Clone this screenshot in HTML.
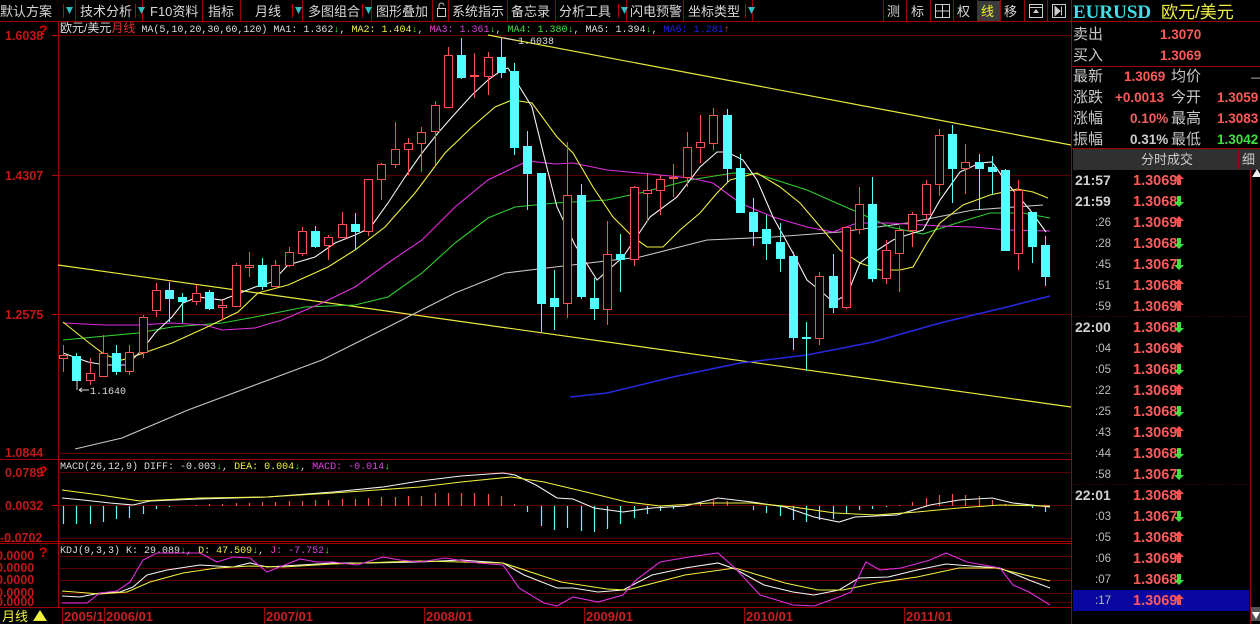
<!DOCTYPE html>
<html><head><meta charset="utf-8"><style>
html,body{margin:0;padding:0;background:#000;width:1260px;height:624px;overflow:hidden}
svg{display:block}
text{font-family:"Liberation Sans","WenQuanYi Zen Hei",sans-serif}
.tb{fill:#d8d8d8;font-size:13px;font-family:"WenQuanYi Zen Hei","Noto Sans CJK SC",sans-serif}
.m{font-family:"Liberation Mono","WenQuanYi Zen Hei",monospace;font-size:10px}
.ax{fill:#c01818;font-size:12.5px;font-weight:bold;font-family:"Liberation Sans",sans-serif}
.lab{fill:#c8c8c8;font-size:15px;font-family:"WenQuanYi Zen Hei","Noto Sans CJK SC",sans-serif}
.v{fill:#ff5a5a;font-size:13.5px;font-weight:bold;font-family:"Liberation Sans",sans-serif}
.t{fill:#d0d0d0;font-size:14px;font-weight:bold;font-family:"Liberation Sans",sans-serif}
.ts{fill:#bbb;font-size:11.5px;font-family:"Liberation Sans",sans-serif}
.dt{fill:#c82020;font-size:13px;font-weight:bold;font-family:"Liberation Sans",sans-serif}
</style></head><body>
<svg width="1260" height="624" viewBox="0 0 1260 624" xmlns="http://www.w3.org/2000/svg">
<rect width="1260" height="624" fill="#000"/>
<g stroke="#a00000" stroke-width="1">
<line x1="0" y1="21.5" x2="1260" y2="21.5"/>
<line x1="75.5" y1="0" x2="75.5" y2="21"/><line x1="142.5" y1="0" x2="142.5" y2="21"/><line x1="202.5" y1="0" x2="202.5" y2="21"/><line x1="240.5" y1="0" x2="240.5" y2="21"/><line x1="302.5" y1="0" x2="302.5" y2="21"/><line x1="371.5" y1="0" x2="371.5" y2="21"/><line x1="432.5" y1="0" x2="432.5" y2="21"/><line x1="448.5" y1="0" x2="448.5" y2="21"/><line x1="507.5" y1="0" x2="507.5" y2="21"/><line x1="555.5" y1="0" x2="555.5" y2="21"/><line x1="626.5" y1="0" x2="626.5" y2="21"/><line x1="683.5" y1="0" x2="683.5" y2="21"/><line x1="752.5" y1="0" x2="752.5" y2="21"/>
<line x1="883.5" y1="0" x2="883.5" y2="21"/><line x1="906.5" y1="0" x2="906.5" y2="21"/><line x1="930.5" y1="0" x2="930.5" y2="21"/><line x1="953.5" y1="0" x2="953.5" y2="21"/><line x1="977.5" y1="0" x2="977.5" y2="21"/><line x1="1000.5" y1="0" x2="1000.5" y2="21"/><line x1="1024.5" y1="0" x2="1024.5" y2="21"/><line x1="1047.5" y1="0" x2="1047.5" y2="21"/><line x1="1071.5" y1="0" x2="1071.5" y2="624"/>
</g>
<g stroke="#c00000"><line x1="63.5" y1="4" x2="63.5" y2="18"/><line x1="135.5" y1="4" x2="135.5" y2="18"/><line x1="292.5" y1="4" x2="292.5" y2="18"/><line x1="362.5" y1="4" x2="362.5" y2="18"/><line x1="618.5" y1="4" x2="618.5" y2="18"/><line x1="745.5" y1="4" x2="745.5" y2="18"/></g>
<g fill="#30c0c0"><path d="M66 7h7l-3.5 7z"/><path d="M138 7h7l-3.5 7z"/><path d="M295 7h7l-3.5 7z"/><path d="M365 7h7l-3.5 7z"/><path d="M621 7h7l-3.5 7z"/><path d="M748 7h7l-3.5 7z"/></g>
<g class="tb">
<text x="0" y="16">默认方案</text><text x="80" y="16">技术分析</text><text x="150" y="16">F10资料</text><text x="208" y="16">指标</text><text x="255" y="16">月线</text><text x="308" y="16">多图组合</text><text x="376" y="16">图形叠加</text><text x="452" y="16">系统指示</text><text x="511" y="16">备忘录</text><text x="559" y="16">分析工具</text><text x="630" y="16">闪电预警</text><text x="688" y="16">坐标类型</text>
<text x="887" y="16">测</text><text x="911" y="16">标</text><text x="957" y="16">权</text><text x="1004" y="16">移</text>
</g>
<rect x="978" y="1" width="22" height="20" fill="#3c3c3c"/>
<text x="981" y="16" class="tb" style="fill:#f0f020">线</text>
<g fill="none" stroke="#ccc"><rect x="437.5" y="8.5" width="8" height="8"/><path d="M439 8.5v-3a2.5 2.5 0 0 1 5 0"/><rect x="935.5" y="4.5" width="14" height="13"/><path d="M935.5 11h14M942.5 4.5v13"/><rect x="1029.5" y="4.5" width="13" height="13"/><path d="M1029.5 7.5h13"/><rect x="1052.5" y="4.5" width="13" height="13"/></g>
<path d="M1033 13h6l-3-4z" fill="#ccc"/><path d="M1055 6.5v9l5-4.5z M1061.5 6.5v9" fill="#ccc" stroke="#ccc"/>
<text x="1073" y="18" style="fill:#3ee0e8;font-family:'Liberation Serif',serif;font-weight:bold;font-size:19px">EURUSD</text>
<text x="1161" y="18" style="fill:#f0f040;font-size:17px;font-family:'WenQuanYi Zen Hei',sans-serif">欧元/美元</text>

<g stroke="#a00000" fill="none">
<line x1="58.5" y1="22" x2="58.5" y2="608"/>
<line x1="0" y1="459.5" x2="1071" y2="459.5"/>
<line x1="0" y1="541.5" x2="1071" y2="541.5"/>
<line x1="0" y1="543.5" x2="1071" y2="543.5"/>
<line x1="0" y1="607.5" x2="1071" y2="607.5"/>
</g>
<g stroke="#5a0000">
<line x1="58" y1="35.5" x2="1071" y2="35.5"/><line x1="58" y1="175.5" x2="1071" y2="175.5"/><line x1="58" y1="314.5" x2="1071" y2="314.5"/><line x1="58" y1="453.5" x2="1071" y2="453.5"/>
<line x1="58" y1="472.5" x2="1071" y2="472.5"/><line x1="58" y1="505.5" x2="1071" y2="505.5"/><line x1="58" y1="538.5" x2="1071" y2="538.5"/>
<line x1="58" y1="556.5" x2="1071" y2="556.5"/><line x1="58" y1="568.5" x2="1071" y2="568.5"/><line x1="58" y1="580.5" x2="1071" y2="580.5"/><line x1="58" y1="593.5" x2="1071" y2="593.5"/><line x1="58" y1="602.5" x2="1071" y2="602.5"/>
</g>
<g class="ax">
<text x="5" y="40">1.6038</text><text x="5" y="180">1.4307</text><text x="5" y="319">1.2575</text><text x="5" y="457">1.0844</text>
<text x="5" y="477">0.0789</text><text x="5" y="510">0.0032</text><text x="0" y="542">-0.0702</text>
<text x="-4" y="560">0.0000</text><text x="-4" y="572">0.0000</text><text x="-4" y="584">0.0000</text><text x="-4" y="597">0.0000</text><text x="-4" y="606">0.0000</text>
</g>
<g fill="#e00000" font-weight="bold" font-size="14" font-family="Liberation Sans"><text x="39" y="35">?</text><text x="39" y="476">?</text><text x="39" y="557">?</text></g>
<g stroke="#c00000"><line x1="52" y1="35.5" x2="58" y2="35.5"/><line x1="52" y1="175.5" x2="58" y2="175.5"/><line x1="52" y1="314.5" x2="58" y2="314.5"/><line x1="52" y1="505.5" x2="58" y2="505.5"/></g>

<text x="60" y="32" class="m"><tspan fill="#ddd" style="font-family:'WenQuanYi Zen Hei',sans-serif;font-size:12px">欧元/美元</tspan><tspan fill="#e03030" style="font-family:'WenQuanYi Zen Hei',sans-serif;font-size:12px">月线</tspan><tspan fill="#ddd"> MA(5,10,20,30,60,120) MA1: 1.362</tspan><tspan fill="#40e040">↓</tspan><tspan fill="#ddd">, </tspan><tspan fill="#f0f040">MA2: 1.404</tspan><tspan fill="#40e040">↓</tspan><tspan fill="#ddd">, </tspan><tspan fill="#e040e0">MA3: 1.361</tspan><tspan fill="#40e040">↓</tspan><tspan fill="#ddd">, </tspan><tspan fill="#40e040">MA4: 1.380↓</tspan><tspan fill="#ddd">, MA5: 1.394</tspan><tspan fill="#40e040">↓</tspan><tspan fill="#ddd">, </tspan><tspan fill="#2020e0">MA6: 1.281</tspan><tspan fill="#ff4040">↑</tspan></text>
<text x="60" y="469" class="m"><tspan fill="#ddd">MACD(26,12,9) DIFF: -0.003</tspan><tspan fill="#40e040">↓</tspan><tspan fill="#ddd">, </tspan><tspan fill="#f0f040">DEA: 0.004</tspan><tspan fill="#40e040">↓</tspan><tspan fill="#ddd">, </tspan><tspan fill="#e040e0">MACD: -0.014</tspan><tspan fill="#40e040">↓</tspan></text>
<text x="60" y="553" class="m"><tspan fill="#ddd">KDJ(9,3,3) K: 29.089</tspan><tspan fill="#40e040">↓</tspan><tspan fill="#ddd">, </tspan><tspan fill="#f0f040">D: 47.509</tspan><tspan fill="#40e040">↓</tspan><tspan fill="#ddd">, </tspan><tspan fill="#e040e0">J: -7.752</tspan><tspan fill="#40e040">↓</tspan></text>

<g stroke="#e8e840" stroke-width="1.2" fill="none">
<line x1="488" y1="35" x2="1071" y2="145"/>
<line x1="58" y1="265" x2="1071" y2="407"/>
</g>
<g fill="none" stroke-width="1.1">
<polyline stroke="#c8c8c8" points="75,449 122,438 188,410 255,385 322,360 388,327 455,293 505,273 555,267 640,257 707,240 773,237 840,232 907,223 973,210 1043,205"/>
<polyline stroke="#2828e0" stroke-width="1.5" points="570,397 607,393 673,377 740,363 807,355 873,342 940,323 1007,307 1050,296"/>
<polyline stroke="#30d030" points="63,340 138,333 172,327 222,323 255,317 305,307 355,305 388,297 422,273 455,243 488,218 515,207 555,203 607,200 640,193 690,180 733,173 757,174 807,190 857,212 890,227 923,234 957,223 990,213 1023,213 1050,218"/>
<polyline stroke="#e030e0" points="63,323 105,325 138,325 172,323 205,325 222,330 255,328 282,320 322,303 355,287 388,263 422,240 455,207 488,180 515,167 528,161 555,164 573,163 607,170 650,174 690,178 713,183 740,203 773,217 807,227 833,232 857,223 890,223 940,226 973,227 1007,230 1050,231"/>
<polyline stroke="#f0f040" points="63,322 88,342 105,355 122,360 138,355 172,343 205,328 238,312 258,293 288,285 328,267 355,250 385,227 415,193 445,153 472,127 495,107 512,100 532,103 557,137 573,153 593,187 613,217 633,237 647,247 663,247 680,230 700,213 717,193 730,180 757,173 780,187 800,203 823,230 840,250 860,263 880,270 900,270 913,267 927,243 940,223 963,205 990,195 1017,189 1033,192 1048,198"/>
<polyline stroke="#f4f4f4" points="63,353 88,362 105,365 127,365 142,350 155,333 172,317 183,303 198,297 222,300 240,293 255,287 272,282 288,265 315,257 335,243 355,235 370,228 388,203 405,177 422,153 438,133 452,117 472,95 488,80 502,70 508,68 532,107 545,160 557,207 575,245 597,280 623,257 650,217 677,197 700,167 717,152 727,152 743,160 757,180 773,217 793,253 807,280 823,293 833,302 847,295 860,263 873,253 893,240 907,235 923,230 940,200 960,172 980,163 992,162 1007,183 1030,210 1046,232"/>
</g>
<g id="cand"></g>
<g id="bars"></g>
<g fill="none" stroke-width="1.1">
<polyline stroke="#f4f4f4" points="62,498 83,500 110,503 133,505 150,501 200,499 267,497 333,492 383,487 420,481 461,476 503,473 515,475 536,485 557,498 573,499 594,508 623,512 652,508 685,506 718,498 752,502 785,507 814,517 839,522 855,517 876,516 897,515 930,505 959,500 992,498 1013,503 1050,507"/>
<polyline stroke="#f0f040" points="62,490 100,495 140,501 200,498 267,497 333,493 420,487 461,482 511,477 544,482 586,492 627,502 660,506 710,503 752,503 793,507 835,513 876,515 917,512 959,508 1000,505 1050,506"/>
<polyline stroke="#f4f4f4" points="62,596 80,597 100,593 120,592 133,587 147,575 167,570 200,565 233,567 250,563 267,567 300,565 333,563 367,563 420,562 461,560 503,563 524,575 557,588 573,588 598,592 623,590 652,575 685,568 718,563 735,569 764,585 793,592 814,595 839,590 859,578 888,577 917,570 946,564 971,566 1000,568 1029,580 1050,588"/>
<polyline stroke="#f0f040" points="62,591 100,594 127,592 150,582 183,573 217,568 250,566 283,567 333,564 420,561 503,563 561,582 607,589 627,590 685,575 735,568 785,583 818,590 843,590 876,583 917,577 959,568 996,568 1050,581"/>
<polyline stroke="#e030e0" points="62,603 87,603 100,593 117,591 130,582 143,560 157,553 183,553 200,553 217,562 233,557 250,558 267,572 300,559 317,562 333,562 357,565 383,557 400,560 420,562 445,558 478,563 503,565 519,588 544,603 557,606 573,597 598,602 623,595 636,580 660,562 689,557 718,553 735,568 760,595 793,605 814,606 839,597 851,592 866,562 880,570 901,568 930,560 946,553 967,562 1000,568 1013,585 1029,592 1050,605"/>
</g>
<text x="90" y="394" class="m" fill="#ddd">1.1640</text><path d="M79 390h10M79 390l3-2M79 390l3 2M77 380v10" stroke="#ddd" fill="none"/>
<text x="518" y="44" class="m" fill="#ddd">1.6038</text><path d="M504 38l10 2" stroke="#ddd"/>

<g stroke="#a00000"><line x1="62.5" y1="608" x2="62.5" y2="624"/><line x1="104.5" y1="608" x2="104.5" y2="624"/><line x1="264.5" y1="608" x2="264.5" y2="624"/><line x1="424.5" y1="608" x2="424.5" y2="624"/><line x1="584.5" y1="608" x2="584.5" y2="624"/><line x1="744.5" y1="608" x2="744.5" y2="624"/><line x1="904.5" y1="608" x2="904.5" y2="624"/></g>
<g class="dt"><text x="64" y="621">2005/1</text><text x="106" y="621">2006/01</text><text x="266" y="621">2007/01</text><text x="426" y="621">2008/01</text><text x="586" y="621">2009/01</text><text x="746" y="621">2010/01</text><text x="906" y="621">2011/01</text></g>
<text x="2" y="621" style="fill:#f0f040;font-size:13px;font-family:'WenQuanYi Zen Hei',sans-serif">月线</text>
<path d="M33 621l7-11 7 11z" fill="#f0f040"/>

<g class="lab">
<text x="1073" y="39">卖出</text><text x="1073" y="60">买入</text>
<text x="1073" y="81">最新</text><text x="1073" y="102">涨跌</text><text x="1073" y="123">涨幅</text><text x="1073" y="144">振幅</text>
<text x="1171" y="81">均价</text><text x="1171" y="102">今开</text><text x="1171" y="123">最高</text><text x="1171" y="144">最低</text>
</g>
<g class="v"><text x="1160" y="39">1.3070</text><text x="1160" y="60">1.3069</text><text x="1124" y="81">1.3069</text><text x="1115" y="102">+0.0013</text><text x="1130" y="123" style="fill:#f06060">0.10%</text><text x="1217" y="102">1.3059</text><text x="1217" y="123">1.3083</text></g>
<text x="1130" y="144" class="v" style="fill:#ccc">0.31%</text>
<text x="1217" y="144" class="v" style="fill:#40e040">1.3042</text>
<text x="1251" y="81" style="fill:#ccc;font-size:12px">—</text>
<line x1="1072" y1="66.5" x2="1260" y2="66.5" stroke="#a00000"/>
<line x1="1072" y1="148.5" x2="1260" y2="148.5" stroke="#a00000"/>
<rect x="1073" y="149" width="187" height="21" fill="#303030"/>
<line x1="1238.5" y1="149" x2="1238.5" y2="170" stroke="#a00000"/>
<text x="1141" y="164" style="fill:#ccc;font-size:13px;font-family:'WenQuanYi Zen Hei',sans-serif">分时成交</text>
<text x="1242" y="164" style="fill:#ccc;font-size:13px;font-family:'WenQuanYi Zen Hei',sans-serif">细</text>
<line x1="1250.5" y1="170" x2="1250.5" y2="624" stroke="#a00000"/>
<path d="M1252 177l5-8 5 8z" fill="#eee"/>
<rect x="1251" y="607" width="9" height="14" fill="#555"/><path d="M1252 612h8l-4 7z" fill="#fff"/>
<rect x="1073" y="590" width="176" height="21" fill="#0808a0"/>
<line x1="1073" y1="316.5" x2="1248" y2="316.5" stroke="#600" stroke-dasharray="1,2"/>
<line x1="1073" y1="484.5" x2="1248" y2="484.5" stroke="#600" stroke-dasharray="1,2"/>
<g id="ticks"></g>
</svg>
<script>
var C=[['r',355,358,345,372],['c',356,380,353,380],['r',373,380,358,385],['r',353,376,335,377],['c',353,371,345,375],['r',352,371,345,375],['r',317,352,315,358],['r',290,310,283,317],['c',290,298,282,322],['c',297,301,293,323],['r',293,301,285,305],['c',292,308,290,310],['r',305,307,300,320],['r',265,306,263,307],['r',265,267,252,277],['c',265,286,258,290],['r',265,286,260,287],['r',252,265,247,267],['r',231,253,227,256],['c',231,246,226,248],['r',237,245,235,260],['r',224,237,212,238],['c',224,231,213,250],['r',179,231,179,236],['r',164,179,163,200],['r',149,164,122,168],['r',143,149,138,175],['r',132,143,127,172],['r',105,131,101,165],['r',55,107,47,108],['c',55,77,38,79],['r',75,76,53,98],['r',57,76,52,95],['c',57,72,37,78],['c',71,147,63,155],['c',146,173,131,210],['c',173,303,173,333],['c',298,306,270,330],['r',195,303,142,318],['c',195,296,184,299],['c',298,308,278,320],['r',254,309,221,325],['c',254,259,234,292],['r',187,259,186,266],['r',190,193,173,222],['r',179,190,175,215],['r',177,178,164,197],['r',147,177,132,187],['r',142,147,115,163],['r',115,143,108,150],['c',115,168,109,183],['c',168,212,154,212],['c',212,231,198,246],['c',229,243,215,260],['c',242,258,223,272],['c',256,337,252,350],['c',337,338,322,371],['r',276,338,272,345],['c',276,307,254,313],['r',227,307,227,309],['r',204,229,187,234],['c',204,278,177,282],['r',250,278,240,284],['r',230,253,226,292],['r',214,230,212,247],['r',184,214,180,220],['r',135,184,129,196],['c',134,168,125,203],['r',162,168,144,194],['c',162,168,154,210],['c',167,171,156,195],['c',170,250,169,251],['r',190,253,180,270],['c',212,246,212,263],['c',245,276,236,286]];
var B=[-18,-18,-18,-16,-13,-12,-8,-3,-1,0,1,2,2,3,3,4,4,5,5,6,6,7,7,8,9,9,10,10,13,13,13,13,12,10,2,-6,-20,-24,-22,-25,-26,-23,-18,-12,-8,-5,-3,2,4,6,5,0,-4,-7,-10,-14,-16,-14,-13,-8,-4,-3,-1,1,4,8,11,12,11,10,6,2,1,-2,-6];
var s='',b='';
for(var i=0;i<C.length;i++){var d=C[i],x=Math.round(63+13.27*i)+0.5,h=Math.max(d[2]-d[1],1);
if(d[0]=='r'){s+='<line x1="'+x+'" y1="'+d[3]+'" x2="'+x+'" y2="'+d[1]+'" stroke="#ff5050"/><line x1="'+x+'" y1="'+d[2]+'" x2="'+x+'" y2="'+d[4]+'" stroke="#ff5050"/><rect x="'+(x-4)+'" y="'+(d[1]+0.5)+'" width="8" height="'+h+'" fill="#000" stroke="#ff5050"/>';}
else{s+='<line x1="'+x+'" y1="'+d[3]+'" x2="'+x+'" y2="'+d[4]+'" stroke="#54ffff"/><rect x="'+(x-4.5)+'" y="'+d[1]+'" width="9" height="'+(h+1)+'" fill="#54ffff"/>';}
var v=B[i];if(v){b+='<line x1="'+x+'" y1="506" x2="'+x+'" y2="'+(506-v)+'" stroke="'+(v>0?'#ff5050':'#54ffff')+'" stroke-width="1.2"/>';}}
document.getElementById('cand').innerHTML=s;document.getElementById('bars').innerHTML=b;
var T=[['21:57','1.3069',1],['21:59','1.3068',0],[':26','1.3069',1],[':28','1.3068',0],[':45','1.3067',0],[':51','1.3068',1],[':59','1.3069',1],['22:00','1.3068',0],[':04','1.3069',1],[':05','1.3068',0],[':22','1.3069',1],[':25','1.3068',0],[':43','1.3069',1],[':44','1.3068',0],[':58','1.3067',0],['22:01','1.3068',1],[':03','1.3067',0],[':05','1.3068',1],[':06','1.3069',1],[':07','1.3068',0],[':17','1.3069',1]];
var t='';for(var j=0;j<T.length;j++){var y=185+21*j,a=T[j];
t+=a[0].length>3?'<text x="1075" y="'+y+'" class="t">'+a[0]+'</text>':'<text x="1095" y="'+(y-1)+'" class="ts">'+a[0]+'</text>';
t+='<text x="1133" y="'+y+'" class="v" style="font-size:14.5px">'+a[1]+'</text>';
t+=a[2]?'<path d="M1179 '+(y-11)+'l-5 5h3v6h4v-6h3z" fill="#ff5050"/>':'<path d="M1179 '+(y+1)+'l-5-5h3v-6h4v6h3z" fill="#40e040"/>';}
document.getElementById('ticks').innerHTML=t;
</script>
</body></html>
